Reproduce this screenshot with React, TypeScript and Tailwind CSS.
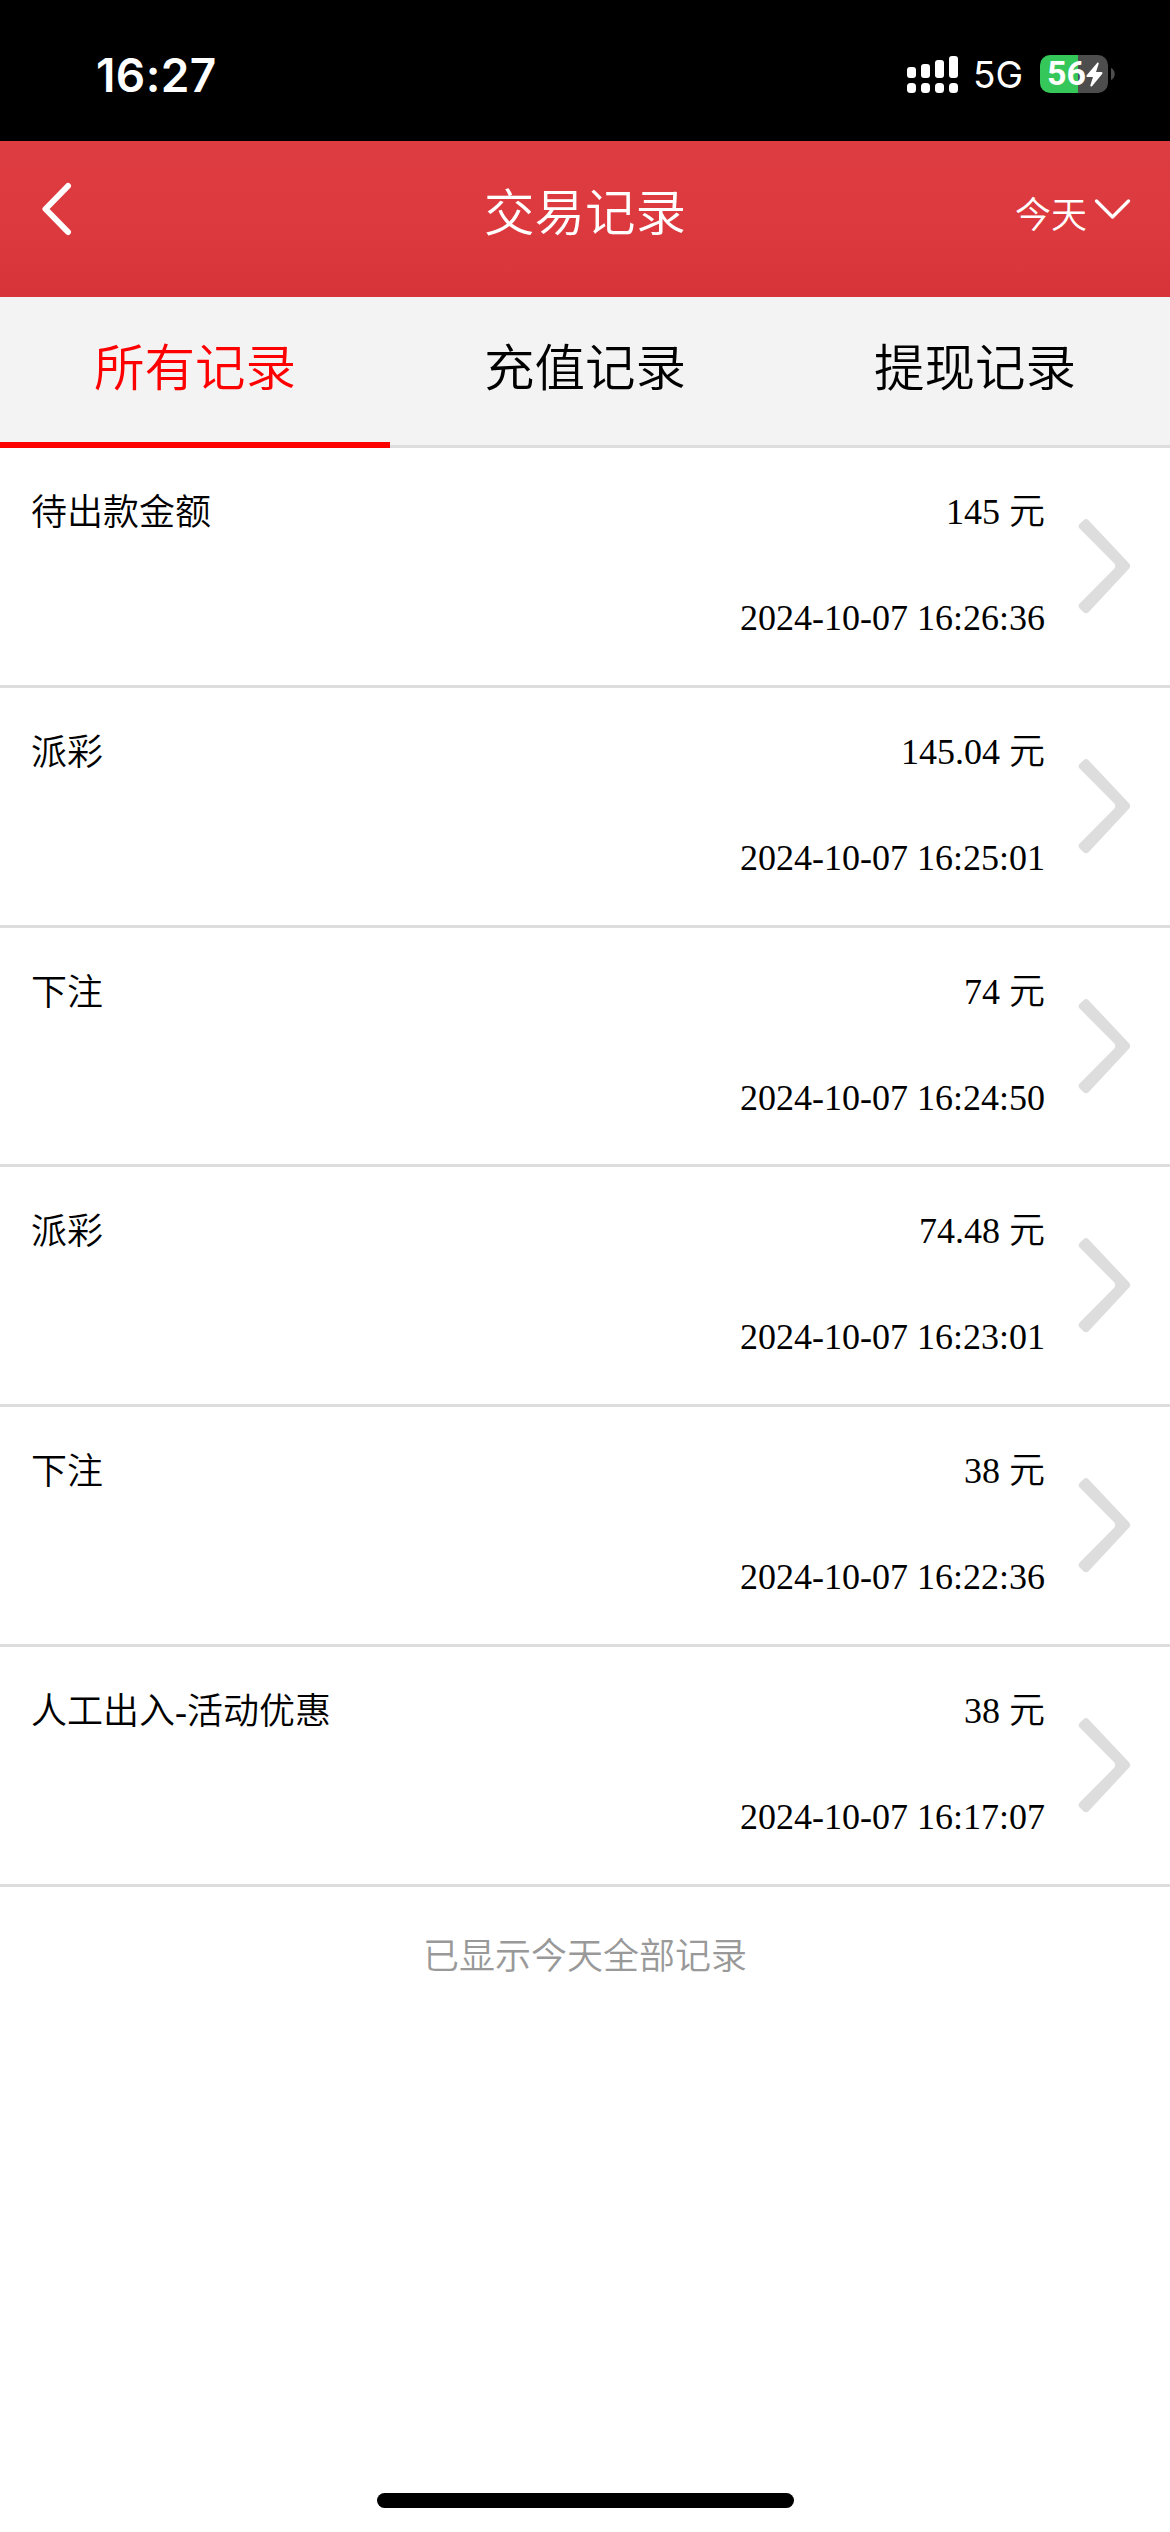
import React from 'react';

interface TradeRecord {
  id: number;
  title: string;
  amount: string;
  time: string;
}

const TABS = ['所有记录', '充值记录', '提现记录'];

const RECORDS: TradeRecord[] = [
  { id: 1, title: '待出款金额', amount: '145', time: '2024-10-07 16:26:36' },
  { id: 2, title: '派彩', amount: '145.04', time: '2024-10-07 16:25:01' },
  { id: 3, title: '下注', amount: '74', time: '2024-10-07 16:24:50' },
  { id: 4, title: '派彩', amount: '74.48', time: '2024-10-07 16:23:01' },
  { id: 5, title: '下注', amount: '38', time: '2024-10-07 16:22:36' },
  { id: 6, title: '人工出入-活动优惠', amount: '38', time: '2024-10-07 16:17:07' },
];

const SignalIcon: React.FC = () => (
  <svg width="51" height="37" viewBox="0 0 51 37" fill="#fff" aria-hidden="true">
    <rect x="0" y="11" width="9" height="11" rx="3" />
    <rect x="14" y="8" width="9" height="14" rx="3" />
    <rect x="28" y="4" width="9" height="18" rx="3" />
    <rect x="42" y="0" width="9" height="22" rx="3" />
    <rect x="0" y="27" width="9" height="10" rx="3.5" />
    <rect x="14" y="27" width="9" height="10" rx="3.5" />
    <rect x="28" y="27" width="9" height="10" rx="3.5" />
    <rect x="42" y="27" width="9" height="10" rx="3.5" />
  </svg>
);

const Battery: React.FC = () => (
  <div className="flex items-center gap-[3px]">
    <div className="flex h-[38px] w-[68px] items-center rounded-[10px] bg-[linear-gradient(to_right,#35c759_38px,#4d4d4d_38px)] pl-[7px]">
      <span className="mb-[2px] w-[39px] font-['Roboto'] text-[34px] leading-[36px] font-bold text-white">56</span>
      <svg className="mt-px" width="17" height="25" viewBox="0 0 17 25" fill="#fff" aria-hidden="true">
        <path d="M11.5 0.5 L0.5 13.5 Q0 15 1.5 15 H7 L4.3 23.5 Q4.5 25 6 24.2 L16.5 11.5 Q16.8 10 15.5 10 H10 L12.8 1.5 Q12.6 0 11.5 0.5 Z" />
      </svg>
    </div>
    <svg width="4" height="12" viewBox="0 0 4 12" fill="#4d4d4d" aria-hidden="true">
      <path d="M0 0 C5 2 5 10 0 12 Z" />
    </svg>
  </div>
);

const StatusBar: React.FC = () => (
  <div className="flex h-[141px] items-start justify-between bg-black pr-[55px] pl-[96px]">
    <span className="pt-[47px] font-['Inter'] text-[46px] leading-[56px] font-semibold tracking-[0.4px] text-white">16:27</span>
    <div className="flex items-center pt-[54px]">
      <SignalIcon />
      <span className="mt-[2px] ml-[15px] w-[51px] font-['Inter'] text-[37px] leading-[38px] font-normal text-white">5G</span>
      <div className="ml-[16px]">
        <Battery />
      </div>
    </div>
  </div>
);

const Header: React.FC = () => (
  <header className="grid h-[156px] grid-cols-3 items-start bg-linear-to-b from-[#dd3c41] via-[#dc3a3f] to-[#d63438] text-white">
    <button className="pt-[41px] pl-[41px]" aria-label="返回">
      <svg width="31" height="54" viewBox="0 0 31 54" fill="none" stroke="#fff" strokeWidth="6" strokeLinecap="round" strokeLinejoin="round">
        <path d="M27 4 L4.5 27 L27 50" />
      </svg>
    </button>
    <h1 className="pt-[36px] text-center text-[50.5px] leading-[75px]">交易记录</h1>
    <button className="flex items-start justify-end pr-[39px]">
      <span className="pt-[49px] text-[36px] leading-[52px]">今天</span>
      <svg className="mt-[57px] ml-[7px]" width="37" height="21" viewBox="0 0 37 21" fill="none" stroke="#fff" strokeWidth="3.2" strokeLinecap="round" strokeLinejoin="round">
        <path d="M2.5 3 L18.5 19 L34.5 3" />
      </svg>
    </button>
  </header>
);

const RecordRow: React.FC<{ record: TradeRecord }> = ({ record }) => (
  <li className="flex h-[239.8px] items-start border-b-[3px] border-[#ddd] pr-[39px] pl-[31px] text-[36px] leading-[52px] text-black">
    <span className="flex-1 pt-[39px]">{record.title}</span>
    <div className="flex flex-col items-end pt-[38px]">
      <span>{record.amount} 元</span>
      <span className="mt-[54px]">{record.time}</span>
    </div>
    <svg className="mt-[71px] ml-[33px]" width="53" height="95" viewBox="0 0 53 95" fill="#ddd" aria-hidden="true">
      <path d="M5.5 1.2 Q8 -1 10.5 1.2 L51.2 44.5 Q53.2 47 51.2 49.5 L10.5 93.2 Q8 95.4 5.5 93.2 L1.6 89.4 Q-0.4 87 1.6 84.6 L36.4 49.5 Q38 47 36.4 44.5 L1.6 9.6 Q-0.4 7.2 1.6 5 Z" />
    </svg>
  </li>
);

const App: React.FC = () => {
  const [activeTab, setActiveTab] = React.useState(0);

  return (
    <div className="flex h-[2532px] w-[1170px] flex-col bg-white font-['Liberation_Serif','Noto_Sans_CJK_SC',sans-serif] font-[350]">
      <StatusBar />
      <Header />
      <nav className="grid h-[151px] grid-cols-3 bg-[#f3f3f3]">
        {TABS.map((tab, index) => (
          <button
            key={tab}
            onClick={() => setActiveTab(index)}
            className={`flex items-start justify-center pt-[35px] text-[50.5px] leading-[75px] ${
              index === activeTab ? 'border-b-[6px] border-[#f00] text-[#f00]' : 'border-b-[3px] border-[#ddd] text-black'
            }`}
          >
            {tab}
          </button>
        ))}
      </nav>
      <ul>
        {RECORDS.map((record) => (
          <RecordRow key={record.id} record={record} />
        ))}
      </ul>
      <p className="pt-[44px] text-center text-[36px] leading-[52px] text-[#999]">已显示今天全部记录</p>
      <div className="mt-auto mb-[24px] ml-[377px] h-[15px] w-[417px] rounded-full bg-black" />
    </div>
  );
};

export default App;
